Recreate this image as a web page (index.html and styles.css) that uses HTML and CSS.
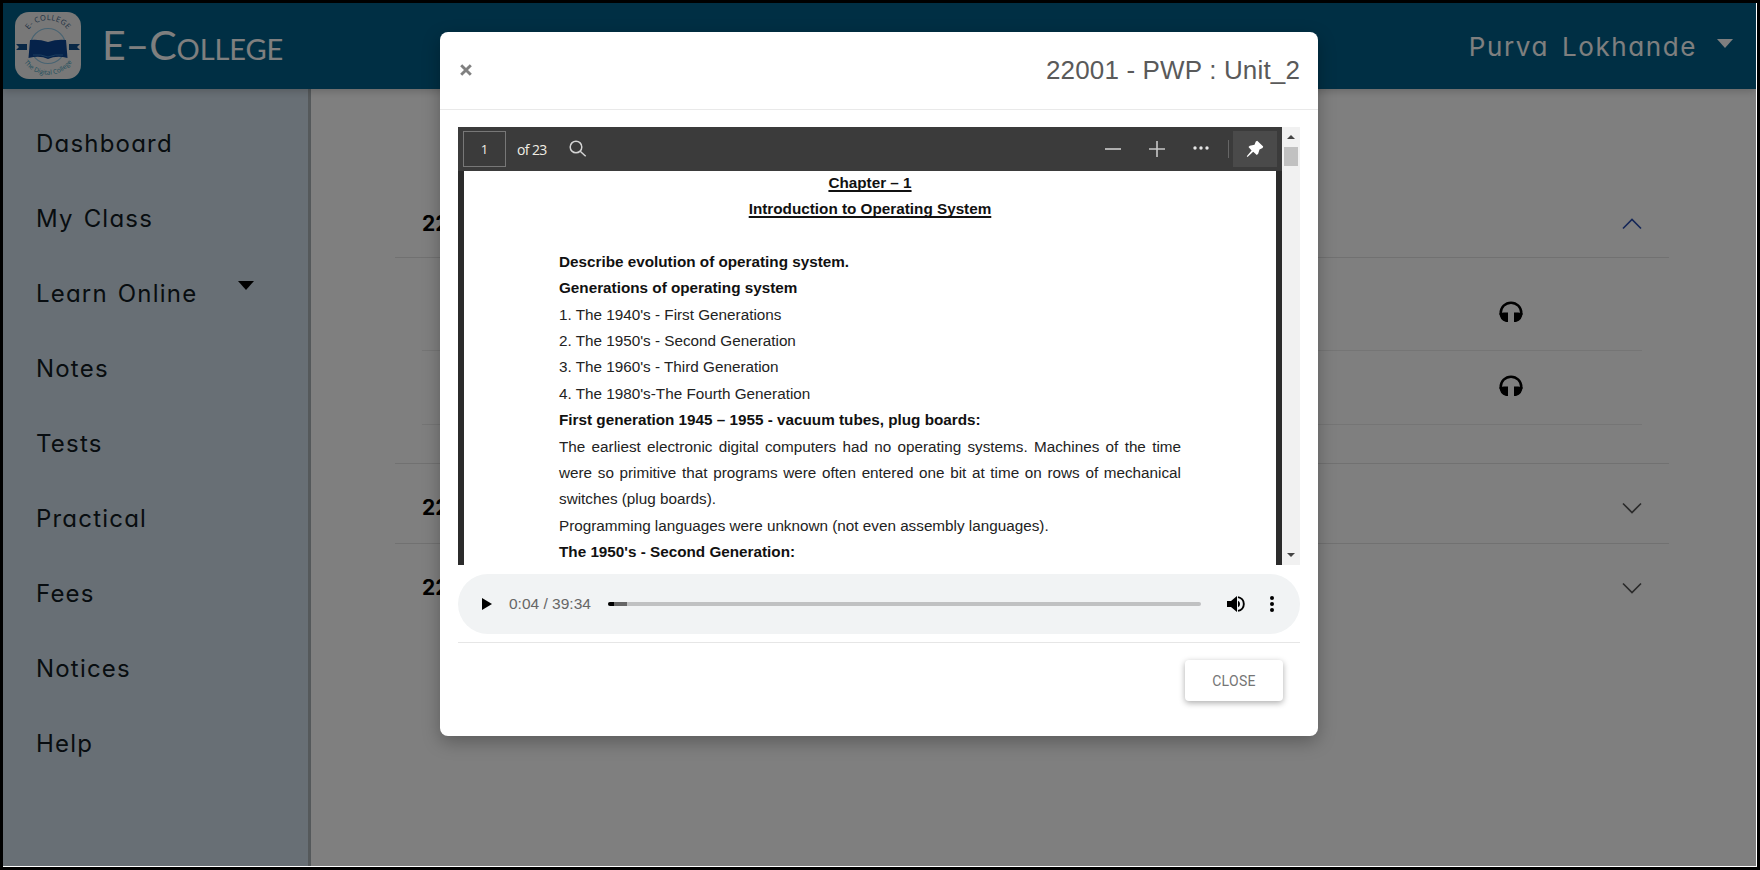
FILE: index.html
```html
<!DOCTYPE html>
<html lang="en">
<head>
<meta charset="utf-8">
<title>E-College</title>
<link rel="stylesheet" href="styles.css">
</head>
<body>
<div class="frame">
<div class="app">
  <header class="topbar">
    <svg class="logo" viewBox="0 0 66 67">
      <defs>
        <path id="arc-top" d="M12.500 19.500A24 24 0 0 1 53.500 19.500"/>
        <path id="arc-bottom" d="M7.500 48A29.500 29.500 0 0 0 58.500 48"/>
      </defs>
      <rect width="66" height="67" rx="14" fill="#f0f0f0"/>
      <circle cx="33" cy="34" r="17.500" fill="none" stroke="#8fc6e4" stroke-width="1.200"/>
      <path d="M1 32h11v6H1l3-3zM65 32H54v6h11l-3-3z" fill="#12508c"/>
      <path d="M15 28q9-1 18 2 9-3 18-2l1.500 18q-11-3-19.500 1-8-4-19.500-1z" fill="#0a4494"/>
      <path d="M18 43q8-1 15 2 7-3 15-2" fill="none" stroke="#3d86c6" stroke-width=".8"/>
      <text class="logo-top"><textPath href="#arc-top" startOffset="50%" text-anchor="middle">E- COLLEGE</textPath></text>
      <text class="logo-bottom"><textPath href="#arc-bottom" startOffset="50%" text-anchor="middle">The Digital College</textPath></text>
    </svg>
    <div class="brand">E–College</div>
    <div class="user">Purva Lokhande</div>
    <svg class="user-caret" viewBox="0 0 16 9"><path d="M0 0h16l-8 9z" fill="#fff"/></svg>
  </header>
  <div class="body">
    <nav class="sidebar">
      <a>Dashboard</a>
      <a>My Class</a>
      <a>Learn Online<svg class="caret" viewBox="0 0 16 9"><path d="M0 0h16l-8 9z"/></svg></a>
      <a>Notes</a>
      <a>Tests</a>
      <a>Practical</a>
      <a>Fees</a>
      <a>Notices</a>
      <a>Help</a>
    </nav>
    <main class="content">
      <section class="item">
        <div class="item-head first"><b>22</b><svg class="chev" viewBox="0 0 20 12"><path d="M1 10.500l9-9 9 9" fill="none" stroke="#2a4fb0" stroke-width="1.700"/></svg></div>
        <div class="panel">
          <div class="row r1"><svg class="phones" viewBox="0 0 24 22"><path d="M1.700 14V12a10.300 10.300 0 0 1 20.600 0v2" fill="none" stroke="#000" stroke-width="2.400"/><path d="M.5 12L5 11.500H9V21H7Q.5 19 .5 12zM23.500 12L19 11.500H15V21H17Q23.500 19 23.500 12z"/></svg></div>
          <div class="row r2"><svg class="phones" viewBox="0 0 24 22"><path d="M1.700 14V12a10.300 10.300 0 0 1 20.600 0v2" fill="none" stroke="#000" stroke-width="2.400"/><path d="M.5 12L5 11.500H9V21H7Q.5 19 .5 12zM23.500 12L19 11.500H15V21H17Q23.500 19 23.500 12z"/></svg></div>
        </div>
      </section>
      <section class="item">
        <div class="item-head"><b>22</b><svg class="chev" viewBox="0 0 20 12"><path d="M1 1.500l9 9 9-9" fill="none" stroke="#555" stroke-width="1.700"/></svg></div>
      </section>
      <section class="item">
        <div class="item-head last"><b>22</b><svg class="chev" viewBox="0 0 20 12"><path d="M1 1.500l9 9 9-9" fill="none" stroke="#555" stroke-width="1.700"/></svg></div>
      </section>
    </main>
  </div>
  <div class="backdrop">
    <div class="modal">
      <div class="modal-head">
        <svg class="x" viewBox="0 0 12 12"><path d="M1.200 1.200l9.600 9.600M10.800 1.200l-9.600 9.600" stroke="#808080" stroke-width="2.900"/></svg>
        <h4>22001 - PWP : Unit_2</h4>
      </div>
      <div class="modal-body">
        <div class="viewer">
          <div class="pdf">
            <div class="tools">
              <span class="page-no">1</span>
              <span class="page-of">of 23</span>
              <svg class="search" viewBox="0 0 18 18" fill="none" stroke="#d4d4d4" stroke-width="1.500"><circle cx="7" cy="7" r="5.800"/><path d="M11.200 11.200l5.500 5"/></svg>
              <svg class="minus" viewBox="0 0 16 16"><path d="M0 8h16" stroke="#bdbdbd" stroke-width="1.800"/></svg>
              <svg class="plus" viewBox="0 0 16 16"><path d="M0 8h16M8 0v16" stroke="#c8c8c8" stroke-width="1.600"/></svg>
              <svg class="dots" viewBox="0 0 16 4" fill="#e6e6e6"><circle cx="2" cy="2" r="1.700"/><circle cx="8" cy="2" r="1.700"/><circle cx="14" cy="2" r="1.700"/></svg>
              <i class="sep"></i>
              <span class="pin"><svg viewBox="0 0 18 18"><path d="M11.200.8L17.200 6.500 16.600 8 13.500 9.500 12.200 13.800 10.800 15 7.200 11.800 1.500 17 .8 16.300 5.600 10.400 2.500 7 3.800 5.800 8.500 4.800 9.800 1.600z" fill="#fff"/></svg></span>
            </div>
            <div class="sheet">
              <p class="c"><u>Chapter – 1</u></p>
              <p class="c"><u>Introduction to Operating System</u></p>
              <p class="gap"></p>
              <p><b>Describe evolution of operating system.</b></p>
              <p><b>Generations of operating system</b></p>
              <p>1. The 1940's - First Generations</p>
              <p>2. The 1950's - Second Generation</p>
              <p>3. The 1960's - Third Generation</p>
              <p>4. The 1980's-The Fourth Generation</p>
              <p><b>First generation 1945 – 1955 - vacuum tubes, plug boards:</b></p>
              <p class="j">The earliest electronic digital computers had no operating systems. Machines of the time were so primitive that programs were often entered one bit at time on rows of mechanical switches (plug boards).</p>
              <p>Programming languages were unknown (not even assembly languages).</p>
              <p><b>The 1950's - Second Generation:</b></p>
            </div>
          </div>
          <div class="scroll">
            <svg viewBox="0 0 8 4"><path d="M0 4l4-4 4 4z" fill="#444"/></svg>
            <i class="thumb"></i>
            <svg viewBox="0 0 8 4"><path d="M0 0l4 4 4-4z" fill="#444"/></svg>
          </div>
        </div>
        <div class="audio">
          <svg class="play" viewBox="0 0 10 12"><path d="M0 0l10 6-10 6z"/></svg>
          <span class="time">0:04 / 39:34</span>
          <div class="track"><i class="played"></i><i class="loaded"></i></div>
          <svg class="vol" viewBox="0 0 18 16"><path d="M0 5h4l6-5v16l-6-5H0z"/><path d="M11 4.800q2 1 2 3.200t-2 3.200z"/><path d="M11 1.100a7 7 0 0 1 0 13.800" fill="none" stroke="#000" stroke-width="1.900"/></svg>
          <svg class="more" viewBox="0 0 4 16"><circle cx="2" cy="2" r="2"/><circle cx="2" cy="8" r="2"/><circle cx="2" cy="14" r="2"/></svg>
        </div>
        <div class="foot"><button class="close">CLOSE</button></div>
      </div>
    </div>
  </div>
</div>
</div>
</body>
</html>
```
FILE: styles.css
```css
* { box-sizing: border-box; }
body { margin: 0; background: #000; font-family: "Liberation Sans", Arial, sans-serif; }
svg { display: block; flex: none; }
.frame { width: 1760px; height: 870px; padding: 3px; background: #000; overflow: hidden; }
.app { position: relative; width: 1754px; height: 864px; border-right: 1px solid #fff; border-bottom: 1px solid #fff; overflow: hidden; background: #fff; display: flex; flex-direction: column; }
.topbar { height: 86px; flex: none; background: #005f88; display: flex; align-items: center; color: #fff; padding: 0 22px 2px 12px; box-shadow: 0 2px 8px rgba(0,0,0,.2); z-index: 1; }
.logo { width: 66px; height: 67px; }
.logo-top { font: 7.5px "Open Sans", sans-serif; fill: #3a5f86; letter-spacing: .4px; }
.logo-bottom { font: 6.5px "Open Sans", sans-serif; fill: #3a9bb8; }
.brand { margin-left: 21px; font-family: Lato, sans-serif; font-variant: small-caps; font-size: 41px; line-height: 60px; letter-spacing: -.1px; white-space: nowrap; }
.user { margin: 4px 0 0 auto; font: 400 26px/40px Inter, sans-serif; font-feature-settings: "cv11"; letter-spacing: 1.6px; word-spacing: 4px; }
.user-caret { width: 16px; height: 9px; margin: 0 1px 3px 20px; }
.body { flex: 1; display: flex; }
.sidebar { width: 308px; background: #d1dfeb; border-right: 3px solid #aab2b6; padding: 17px 0 0 33px; display: flex; flex-direction: column; }
.sidebar a { height: 75px; display: flex; align-items: center; font: 400 24px/30px Inter, sans-serif; font-feature-settings: "cv11"; letter-spacing: 1.2px; word-spacing: 2px; color: #111a22; }
.sidebar .caret { width: 16px; height: 9px; margin: 0 54px 17px auto; }
.content { flex: 1; padding: 101px 87px 0 84px; }
.item { border-bottom: 1px solid #e2e2e2; }
.item:last-child { border: 0; }
.item-head { height: 79px; padding: 9px 27px 0 27px; display: flex; justify-content: space-between; align-items: center; font: 21px/26px Inter, sans-serif; }
.item-head.first { height: 68px; padding-top: 0; border-bottom: 1px solid #e2e2e2; }
.chev { width: 20px; height: 12px; }
.panel { height: 205px; padding: 0 27px 0 27px; }
.row { border-bottom: 1px solid #eaeaea; padding-right: 119px; display: flex; justify-content: flex-end; }
.r1 { height: 93px; padding-top: 43px; }
.r2 { height: 74px; padding-top: 24px; }
.phones { width: 24px; height: 22px; }
.backdrop { position: absolute; inset: 0; background: rgba(0,0,0,.5); z-index: 2; padding: 29px 0 0 437px; }
.modal { width: 878px; height: 704px; background: #fff; border-radius: 8px; box-shadow: 0 6px 18px rgba(0,0,0,.28); }
.modal-head { height: 78px; border-bottom: 1px solid #e9e9e9; display: flex; justify-content: space-between; align-items: center; padding: 0 18px 1px 20px; }
.x { width: 12px; height: 12px; }
h4 { margin: 0; font-weight: 400; font-size: 26px; color: #5a5a5a; letter-spacing: .15px; }
.modal-body { padding: 17px 18px 0; }
.viewer { height: 438px; display: flex; }
.pdf { width: 824px; background: #2b2b2b; display: flex; flex-direction: column; overflow: hidden; }
.tools { height: 44px; flex: none; background: #3b3b3b; display: flex; align-items: center; color: #f0ede4; font: 14px "Open Sans", sans-serif; padding: 0 5px; }
.page-no { width: 43px; height: 36px; border: 1px solid #777; display: flex; align-items: center; justify-content: center; font-size: 13px; }
.page-of { margin-left: 11px; width: 52px; font-size: 14px; letter-spacing: -.6px; white-space: nowrap; }
.search { width: 18px; height: 18px; }
.minus { width: 16px; height: 16px; margin-left: auto; }
.plus { width: 16px; height: 16px; margin-left: 28px; }
.dots { width: 16px; height: 4px; margin: 0 0 2px 28px; }
.sep { width: 1px; height: 18px; background: #666; margin: 0 4px 0 19px; }
.pin { width: 44px; height: 36px; background: #4a4a4a; display: flex; align-items: center; justify-content: center; }
.pin svg { width: 18px; height: 18px; }
.sheet { flex: 1; margin: 0 6px; background: #fff; padding: 0 95px 0 95px; font-size: 15.27px; line-height: 26.4px; color: #222; }
.sheet p { margin: 0; white-space: nowrap; }
.sheet p:first-child { margin-top: -1.4px; }
.sheet b, .c { color: #111; font-weight: 700; }
.sheet .c { text-align: center; }
.sheet .gap { height: 26.4px; }
.sheet .j { white-space: normal; text-align: justify; }
.sheet u { text-underline-offset: 2px; text-decoration-skip-ink: none; text-decoration-thickness: 1.5px; }
.scroll { width: 18px; background: #f1f1f1; display: flex; flex-direction: column; align-items: center; padding: 8px 2px; }
.scroll svg { width: 8px; height: 4px; }
.thumb { width: 14px; height: 19px; background: #c1c1c1; margin: 8px 0 auto; }
.audio { margin-top: 9px; height: 60px; border-radius: 30px; background: #f1f3f4; display: flex; align-items: center; padding: 0 26px 0 24px; }
.play { width: 10px; height: 12px; }
.time { margin-left: 17px; width: 98.500px; font: 15.5px "Liberation Sans", sans-serif; color: #666; white-space: nowrap; }
.track { width: 593px; height: 4px; border-radius: 2px; background: #c0c1c2; display: flex; overflow: hidden; }
.played { width: 6px; background: #000; }
.loaded { width: 13px; background: #666; }
.vol { width: 18px; height: 16px; margin-left: 26px; }
.more { width: 4px; height: 16px; margin-left: auto; }
.foot { margin-top: 8px; border-top: 1px solid #e6e6e6; padding: 17px 17px 0; display: flex; justify-content: flex-end; }
.close { width: 98px; height: 41px; border: 0; border-radius: 4px; background: #fff; color: #757575; font: 14px Roboto, sans-serif; letter-spacing: .3px; box-shadow: 0 2px 6px rgba(0,0,0,.33); }
```
